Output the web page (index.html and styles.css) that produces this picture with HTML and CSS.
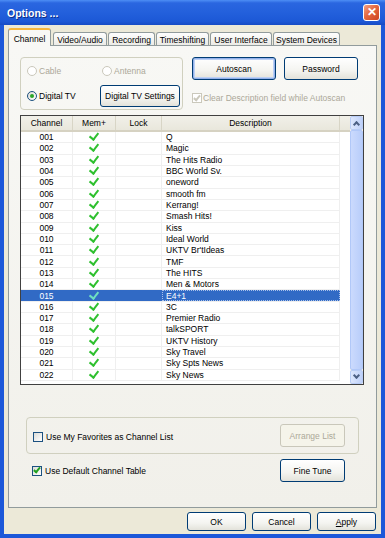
FILE: index.html
```html
<!DOCTYPE html>
<html lang="en">
<head>
    <meta charset="UTF-8">
    <title>Options ...</title>
    <link rel="stylesheet" href="styles.css">
</head>
<body>
    <div class="window">
        <div class="titlebar">
            <span class="title">Options ...</span>
            <span class="close">&#x2715;</span>
        </div>
        <div class="client">
            <div class="tabs">
                <div class="tab active" style="width:43px">Channel</div>
                <div class="tab" style="width:54px">Video/Audio</div>
                <div class="tab" style="width:47px">Recording</div>
                <div class="tab" style="width:53px">Timeshifting</div>
                <div class="tab" style="width:62px">User Interface</div>
                <div class="tab" style="width:67px">System Devices</div>
            </div>
            <div class="panel">
                <div class="top">
                    <div class="group source">
                        <div class="src-row first">
                            <label class="opt disabled" style="width:75px"><span class="radio"></span>Cable</label>
                            <label class="opt disabled"><span class="radio"></span>Antenna</label>
                        </div>
                        <div class="src-row second">
                            <label class="opt" style="width:73px"><span class="radio checked"></span>Digital TV</label>
                            <button class="btn dtv">Digital TV Settings</button>
                        </div>
                    </div>
                    <div class="scan">
                        <div class="scan-buttons">
                            <button class="btn default autoscan">Autoscan</button>
                            <button class="btn password">Password</button>
                        </div>
                        <label class="opt disabled clear"><span class="check on"></span>Clear Description field while Autoscan</label>
                    </div>
                </div>

                <div class="list">
                    <div class="list-body">
                        <div class="head">
                            <div class="hcell">Channel</div>
                            <div class="hcell">Mem+</div>
                            <div class="hcell">Lock</div>
                            <div class="hcell">Description</div>
                            <div class="hcell filler"></div>
                        </div>
                        <div class="row"><span>001</span><span><i class="tick"></i></span><span></span><span class="desc">Q</span></div>
                        <div class="row"><span>002</span><span><i class="tick"></i></span><span></span><span class="desc">Magic</span></div>
                        <div class="row"><span>003</span><span><i class="tick"></i></span><span></span><span class="desc">The Hits Radio</span></div>
                        <div class="row"><span>004</span><span><i class="tick"></i></span><span></span><span class="desc">BBC World Sv.</span></div>
                        <div class="row"><span>005</span><span><i class="tick"></i></span><span></span><span class="desc">oneword</span></div>
                        <div class="row"><span>006</span><span><i class="tick"></i></span><span></span><span class="desc">smooth fm</span></div>
                        <div class="row"><span>007</span><span><i class="tick"></i></span><span></span><span class="desc">Kerrang!</span></div>
                        <div class="row"><span>008</span><span><i class="tick"></i></span><span></span><span class="desc">Smash Hits!</span></div>
                        <div class="row"><span>009</span><span><i class="tick"></i></span><span></span><span class="desc">Kiss</span></div>
                        <div class="row"><span>010</span><span><i class="tick"></i></span><span></span><span class="desc">Ideal World</span></div>
                        <div class="row"><span>011</span><span><i class="tick"></i></span><span></span><span class="desc">UKTV Br'tIdeas</span></div>
                        <div class="row"><span>012</span><span><i class="tick"></i></span><span></span><span class="desc">TMF</span></div>
                        <div class="row"><span>013</span><span><i class="tick"></i></span><span></span><span class="desc">The HITS</span></div>
                        <div class="row"><span>014</span><span><i class="tick"></i></span><span></span><span class="desc">Men &amp; Motors</span></div>
                        <div class="row selected"><span>015</span><span><i class="tick"></i></span><span></span><span class="desc">E4+1</span></div>
                        <div class="row"><span>016</span><span><i class="tick"></i></span><span></span><span class="desc">3C</span></div>
                        <div class="row"><span>017</span><span><i class="tick"></i></span><span></span><span class="desc">Premier Radio</span></div>
                        <div class="row"><span>018</span><span><i class="tick"></i></span><span></span><span class="desc">talkSPORT</span></div>
                        <div class="row"><span>019</span><span><i class="tick"></i></span><span></span><span class="desc">UKTV History</span></div>
                        <div class="row"><span>020</span><span><i class="tick"></i></span><span></span><span class="desc">Sky Travel</span></div>
                        <div class="row"><span>021</span><span><i class="tick"></i></span><span></span><span class="desc">Sky Spts News</span></div>
                        <div class="row"><span>022</span><span><i class="tick"></i></span><span></span><span class="desc">Sky News</span></div>
                    </div>
                    <div class="scrollbar">
                        <div class="sb-btn up"></div>
                        <div class="sb-thumb"></div>
                        <div class="sb-btn down"></div>
                    </div>
                </div>

                <div class="group favs">
                    <label class="opt"><span class="check"></span>Use My Favorites as Channel List</label>
                    <button class="btn disabled-btn arrange">Arrange List</button>
                </div>
                <div class="default-row">
                    <label class="opt"><span class="check on"></span>Use Default Channel Table</label>
                    <button class="btn finetune">Fine Tune</button>
                </div>
            </div>
            <div class="dialog-buttons">
                <button class="btn dlg">OK</button>
                <button class="btn dlg">Cancel</button>
                <button class="btn dlg"><u>A</u>pply</button>
            </div>
        </div>
    </div>
</body>
</html>
```

FILE: styles.css
```css
body {
    margin: 0;
    font-family: 'Liberation Sans', Arial, sans-serif;
    font-size: 8.5px;
    color: #000;
}
.window {
    width: 385px;
    height: 538px;
    display: flex;
    flex-direction: column;
    background: #1c58d9;
    overflow: hidden;
}
.titlebar {
    height: 25px;
    flex: none;
    display: flex;
    align-items: center;
    justify-content: space-between;
    padding: 0 5px 0 7px;
    background: linear-gradient(to bottom, #4d8ef5 0%, #2a66e0 12%, #2360dc 50%, #1c58d6 85%, #164bc4 100%);
}
.title {
    color: #fff;
    font-weight: bold;
    font-size: 10.5px;
    text-shadow: 1px 1px 0 #0d2f8a;
}
.close {
    width: 15px;
    height: 15px;
    border: 1px solid #fff;
    border-radius: 3px;
    background: linear-gradient(135deg, #f5a084 0%, #e5683f 45%, #cc4520 100%);
    color: #fff;
    font-size: 12px;
    font-weight: bold;
    display: flex;
    align-items: center;
    justify-content: center;
    margin-top: -1px;
}
.client {
    flex: 1;
    margin: 0 4px 4px 4px;
    background: #ece9d8;
    padding: 3px 0 0 4px;
    display: flex;
    flex-direction: column;
}
.tabs {
    display: flex;
    align-items: flex-end;
    height: 17px;
    gap: 1px;
    position: relative;
    z-index: 1;
}
.tab {
    height: 13px;
    box-sizing: border-box;
    border: 1px solid #919b9c;
    border-bottom: none;
    border-radius: 3px 3px 0 0;
    background: linear-gradient(to bottom, #fefefe, #ecebe6);
    display: flex;
    align-items: center;
    justify-content: center;
    white-space: nowrap;
    padding-top: 1px;
}
.tab.active {
    height: 18px;
    margin-bottom: -1px;
    background: #f8f8f5;
    border-top: 2px solid #f7b63c;
    margin-right: 1px;
}
.panel {
    width: 369px;
    height: 463px;
    box-sizing: border-box;
    border: 1px solid #919b9c;
    background: linear-gradient(to bottom, #f8f8f5, #f1f0ea);
    padding: 11px 11px 0 11px;
}
.top {
    display: flex;
    height: 58px;
}
.group {
    box-sizing: border-box;
    border: 1px solid #d0d0bf;
    border-radius: 4px;
}
.source {
    width: 163px;
    height: 53px;
    padding: 4px 0 0 6px;
}
.src-row {
    display: flex;
    align-items: center;
}
.src-row.first {
    height: 18px;
}
.src-row.second {
    height: 24px;
    margin-top: 4px;
}
.opt {
    display: flex;
    align-items: center;
    white-space: nowrap;
}
.opt.disabled {
    color: #aca899;
}
.radio {
    width: 10px;
    height: 10px;
    box-sizing: border-box;
    border: 1px solid #1c5180;
    border-radius: 50%;
    background: linear-gradient(135deg, #dcdcd7, #fff);
    margin-right: 2px;
    display: flex;
    align-items: center;
    justify-content: center;
}
.disabled .radio {
    border-color: #cac8bb;
    background: #fff;
}
.radio.checked::after {
    content: '';
    width: 4px;
    height: 4px;
    border-radius: 50%;
    background: #2aa52a;
}
.check {
    width: 10px;
    height: 10px;
    box-sizing: border-box;
    border: 1px solid #1c5180;
    background: linear-gradient(135deg, #dcdcd7, #fff);
    margin-right: 3px;
    display: flex;
    align-items: center;
    justify-content: center;
}
.check.on::after {
    content: '';
    width: 2px;
    height: 5px;
    border: solid #21a121;
    border-width: 0 2px 2px 0;
    transform: rotate(40deg);
    margin-top: -2px;
}
.disabled .check {
    border-color: #cac8bb;
    background: #fff;
}
.disabled .check.on::after {
    border-color: #cac8bb;
}
.btn {
    font-family: inherit;
    font-size: 8.5px;
    color: #000;
    box-sizing: border-box;
    border: 1px solid #003c74;
    border-radius: 3px;
    background: linear-gradient(to bottom, #fff 0%, #f4f4f0 60%, #e3e2da 100%);
    padding: 0;
    height: 23px;
    white-space: nowrap;
}
.dtv {
    width: 80px;
    height: 22px;
}
.scan {
    margin-left: 9px;
}
.scan-buttons {
    display: flex;
    gap: 8px;
}
.autoscan {
    width: 84px;
}
.password {
    width: 74px;
}
.btn.default {
    box-shadow: inset 0 0 0 1px #93b1ea, inset 0 0 0 2px #bcd0f4;
}
.clear {
    margin-top: 13px;
    height: 10px;
}
.clear .check {
    margin-right: 1px;
}
.list {
    width: 344px;
    height: 270px;
    box-sizing: border-box;
    border: 1px solid #404040;
    background: #fff;
    display: flex;
}
.list-body {
    flex: 1;
}
.head {
    display: grid;
    grid-template-columns: 52px 43px 46px 178px 1fr;
    height: 16px;
    box-sizing: border-box;
    background: linear-gradient(to bottom, #f1f0e9, #e9e7dc);
    border-bottom: 2px solid #d6d2c2;
}
.hcell {
    display: flex;
    align-items: center;
    justify-content: center;
    border-right: 1px solid #d8d5c6;
}
.hcell.filler {
    border-right: none;
}
.row {
    display: grid;
    grid-template-columns: 52px 43px 46px 178px;
    height: 11.32px;
    box-sizing: border-box;
    border-bottom: 1px solid #efefef;
    line-height: 10px;
    width: 319px;
}
.row span {
    display: flex;
    align-items: center;
    justify-content: center;
    border-right: 1px solid #efefef;
}
.row span.desc {
    justify-content: flex-start;
    padding-left: 4px;
}
.row.selected {
    background: #316ac5;
    color: #fff;
}
.row.selected span {
    border-right-color: #316ac5;
}
.row.selected span.desc {
    outline: 1px dotted #a9c1ea;
    outline-offset: -1px;
}
.tick {
    display: block;
    width: 4px;
    height: 7px;
    border: solid #2fc02f;
    border-width: 0 2px 2px 0;
    transform: rotate(38deg);
    margin-top: -3px;
}
.selected .tick {
    border-color: #6ee0c0;
}
.scrollbar {
    width: 13px;
    display: flex;
    flex-direction: column;
    background: #f3f1ec;
}
.sb-btn {
    height: 14px;
    box-sizing: border-box;
    border: 1px solid #b9cdf6;
    border-radius: 2px;
    background: linear-gradient(to right, #dde7fd, #bfd1f9);
    display: flex;
    align-items: center;
    justify-content: center;
}
.sb-btn::after {
    content: '';
    width: 3px;
    height: 3px;
    border: solid #4d6185;
    border-width: 2px 0 0 2px;
}
.sb-btn.up::after {
    transform: rotate(45deg);
    margin-top: 3px;
}
.sb-btn.down::after {
    transform: rotate(225deg);
    margin-top: -3px;
}
.sb-thumb {
    flex: 1;
    box-sizing: border-box;
    border: 1px solid #b1c8f8;
    border-radius: 2px;
    background: linear-gradient(to right, #cbdafd, #b8cdfa);
}
.favs {
    margin: 32px 0 0 6px;
    width: 333px;
    height: 37px;
    display: flex;
    align-items: center;
    justify-content: space-between;
    padding: 0 13px 0 6px;
}
.favs .opt {
    margin-top: 2px;
}
.arrange {
    width: 65px;
    border-color: #c9c7ba;
    color: #aca899;
    background: #f5f4ea;
}
.default-row {
    margin-top: 5px;
    height: 23px;
    display: flex;
    align-items: center;
    justify-content: space-between;
    padding: 0 20px 0 12px;
}
.finetune {
    width: 65px;
}
.dialog-buttons {
    display: flex;
    justify-content: flex-end;
    gap: 6px;
    margin-top: 4px;
    padding-right: 5px;
}
.btn.dlg {
    width: 59px;
    height: 19px;
}
```
